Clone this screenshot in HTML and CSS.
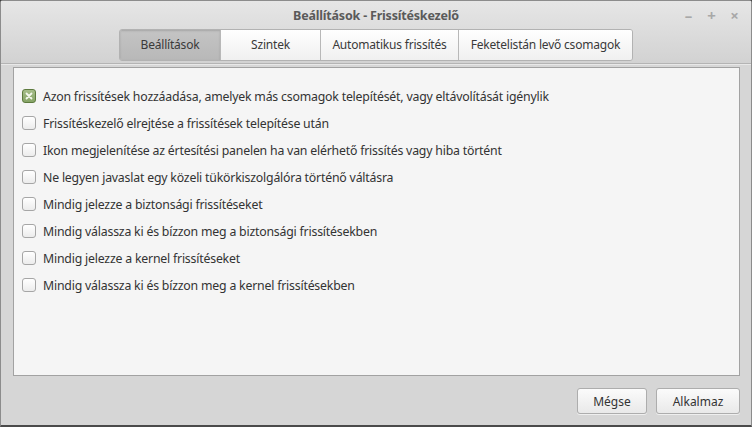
FILE: index.html
```html
<!DOCTYPE html>
<html lang="hu">
<head>
<meta charset="utf-8">
<title>Beállítások - Frissítéskezelő</title>
<link rel="stylesheet" href="styles.css">
</head>
<body>
<div class="window">
  <div class="header">
    <div class="titlebar">
      <span class="title">Beállítások - Frissítéskezelő</span>
      <div class="controls">
        <span class="ctl">–</span>
        <span class="ctl">+</span>
        <span class="ctl">×</span>
      </div>
    </div>
    <div class="tabs-row">
      <div class="tabs">
        <button class="tab active">Beállítások</button>
        <button class="tab">Szintek</button>
        <button class="tab">Automatikus frissítés</button>
        <button class="tab">Feketelistán levő csomagok</button>
      </div>
    </div>
  </div>
  <div class="body">
    <div class="frame">
      <label class="row"><span class="cb checked"><svg viewBox="0 0 14 14" width="14" height="14"><path d="M4.5 4.5 L9.5 9.5 M9.5 4.5 L4.5 9.5" stroke="#f4f8ee" stroke-width="1.8" stroke-linecap="round"/></svg></span>Azon frissítések hozzáadása, amelyek más csomagok telepítését, vagy eltávolítását igénylik</label>
      <label class="row"><span class="cb"></span>Frissítéskezelő elrejtése a frissítések telepítése után</label>
      <label class="row"><span class="cb"></span>Ikon megjelenítése az értesítési panelen ha van elérhető frissítés vagy hiba történt</label>
      <label class="row"><span class="cb"></span>Ne legyen javaslat egy közeli tükörkiszolgálóra történő váltásra</label>
      <label class="row"><span class="cb"></span>Mindig jelezze a biztonsági frissítéseket</label>
      <label class="row"><span class="cb"></span>Mindig válassza ki és bízzon meg a biztonsági frissítésekben</label>
      <label class="row"><span class="cb"></span>Mindig jelezze a kernel frissítéseket</label>
      <label class="row"><span class="cb"></span>Mindig válassza ki és bízzon meg a kernel frissítésekben</label>
    </div>
    <div class="actions">
      <button class="btn">Mégse</button>
      <button class="btn">Alkalmaz</button>
    </div>
  </div>
</div>
</body>
</html>
```
FILE: styles.css
```css
html, body {
  margin: 0;
  padding: 0;
  width: 752px;
  height: 427px;
  overflow: hidden;
  background: #3a3a3a;
}
.window {
  box-sizing: border-box;
  width: 752px;
  height: 427px;
  border: 1px solid #8c8c8c;
  border-bottom: 2px solid #4a4a4a;
  border-radius: 3px 3px 0 0;
  display: flex;
  flex-direction: column;
  font-family: "Noto Sans", "DejaVu Sans", sans-serif;
  font-size: 12px;
  color: #333;
  background: #d6d6d6;
}
.header {
  height: 62px;
  background: linear-gradient(#e6e6e6, #d2d2d2);
  border-bottom: 1px solid #b4b4b4;
  box-shadow: 0 1px 0 #e8e8e8;
  display: flex;
  flex-direction: column;
}
.titlebar {
  height: 28px;
  display: flex;
  align-items: center;
  justify-content: center;
  position: relative;
}
.title {
  font-weight: bold;
  font-size: 12.5px;
  color: #5a5a5a;
  letter-spacing: -0.2px;
}
.controls {
  position: absolute;
  right: 10px;
  top: 4px;
  display: flex;
  gap: 10px;
}
.ctl {
  width: 13px;
  text-align: center;
  color: #a8a8a8;
  font-weight: bold;
  font-size: 15px;
}
.tabs-row {
  display: flex;
  justify-content: center;
}
.tabs {
  display: flex;
  height: 30px;
  border: 1px solid #b2b2b2;
  border-radius: 3px;
  overflow: hidden;
}
.tab {
  font-family: inherit;
  font-size: 12px;
  color: #3a3a3a;
  border: 0;
  border-left: 1px solid #b8b8b8;
  background: linear-gradient(#ffffff, #f0f0f0);
  padding: 0 0 1px;
  margin: 0;
  letter-spacing: -0.2px;
}
.tab:first-child { border-left: 0; }
.tab.active {
  background: linear-gradient(#c4c4c4, #b8b8b8);
  box-shadow: inset 0 1px 2px rgba(0,0,0,0.15);
}
.tab:nth-child(1) { width: 100px; }
.tab:nth-child(2) { width: 100px; }
.tab:nth-child(3) { width: 138px; }
.tab:nth-child(4) { width: 174px; }
.body {
  flex: 1;
  display: flex;
  flex-direction: column;
  padding: 3px 11px 0 12px;
}
.frame {
  box-sizing: border-box;
  height: 309px;
  background: #f5f5f5;
  border: 1px solid #a2a2a2;
  padding: 19px 0 0 8px;
  display: flex;
  flex-direction: column;
  gap: 9px;
}
.row {
  display: flex;
  align-items: center;
  height: 18px;
  gap: 7px;
  font-size: 12.3px;
  letter-spacing: -0.2px;
  color: #333;
}
.cb {
  box-sizing: border-box;
  width: 14px;
  height: 14px;
  border: 1px solid #a6a6a6;
  border-radius: 3px;
  background: linear-gradient(#ffffff, #ececec);
  flex: none;
  display: flex;
}
.cb.checked {
  border-color: #5d7a3e;
  background: linear-gradient(#a6bd8a, #86a466);
}
.cb.checked svg { margin: -1px; }
.actions {
  display: flex;
  justify-content: flex-end;
  gap: 9px;
  padding-top: 12px;
}
.btn {
  font-family: inherit;
  font-size: 12px;
  color: #333;
  height: 26px;
  border: 1px solid #adadad;
  border-radius: 3px;
  background: linear-gradient(#fbfbfb, #e9e9e9);
  box-shadow: 0 1px 0 rgba(255,255,255,0.6);
  padding: 0;
}
.btn:nth-child(1) { width: 70px; }
.btn:nth-child(2) { width: 84px; }
```
